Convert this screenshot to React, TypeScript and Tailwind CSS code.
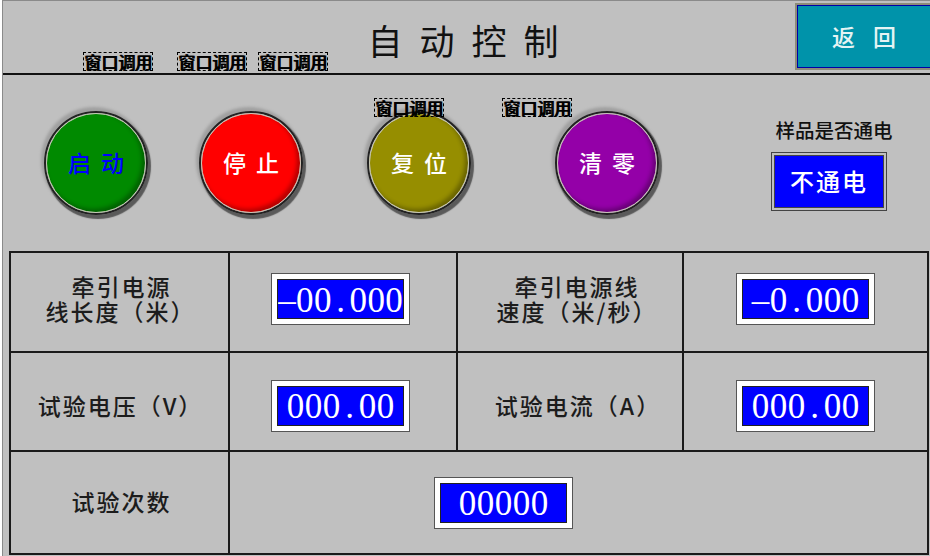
import React from "react";

const CJK = "font-['Noto_Sans_CJK_SC','Liberation_Serif',serif]";

function CallLabel({ className }: { className: string }) {
  return (
    <div
      className={`absolute h-[19px] w-[70px] whitespace-nowrap border border-dashed border-black text-center text-[17px] font-medium leading-[17px] text-black [text-shadow:1px_0_0_#000] ${className}`}
    >
      窗口调用
    </div>
  );
}

function RoundButton({ label, fill, text, className }: { label: string; fill: string; text: string; className: string }) {
  return (
    <div
      className={`flex h-[104px] w-[104px] shrink-0 items-center justify-center rounded-full border-2 border-[#222] shadow-[2px_3px_1px_1px_#5a5a5a,-2px_-3px_3px_1px_#a0a0a0] ${className}`}
    >
      <div
        className={`flex h-full w-full items-center justify-center rounded-full border border-[#c8c8b8] text-[23px] font-medium shadow-[inset_-3px_-3px_4px_rgba(0,0,0,0.3)] ${fill} ${text}`}
      >
        <span className="mr-[-10px] tracking-[10px]">{label}</span>
      </div>
    </div>
  );
}

function NumberBox({ value, overflow }: { value: string; overflow?: boolean }) {
  return (
    <div className="h-[52px] w-[139px] border border-[#555] bg-white p-[5px]">
      <div
        className={`flex h-full items-center overflow-hidden whitespace-nowrap border border-[#222] bg-[#0000ff] pt-[2px] font-['Liberation_Serif',serif] text-[35px] leading-none text-white ${overflow ? "justify-start" : "justify-center"}`}
      >
        {value.split("").map((c, i) => (
          <span key={i} className="inline-block w-[18px] text-center">
            {c}
          </span>
        ))}
      </div>
    </div>
  );
}

function Cell({ children, className = "" }: { children: React.ReactNode; className?: string }) {
  return <div className={`flex items-center justify-center bg-[#c0c0c0] ${className}`}>{children}</div>;
}

function Label({ children, className = "" }: { children: React.ReactNode; className?: string }) {
  return <div className={`whitespace-nowrap text-[23px] font-medium leading-[25px] tracking-[2px] text-[#1c1c1c] ${className}`}>{children}</div>;
}

export default function App() {
  return (
    <div className={`relative ml-[2px] h-[556px] w-[928px] overflow-hidden border-l border-t border-[#8a8a8a] bg-[#c0c0c0] ${CJK}`}>
      {/* header */}
      <div className="relative flex h-[74px] items-center justify-center border-b-2 border-[#111]">
        <div className="ml-[10px] mt-[6px] text-[35px] font-normal tracking-[17px] text-[#111]">自动控制</div>
        <div className="absolute left-[792px] top-[2px] flex h-[67px] w-[140px] items-center justify-center border-2 border-[#8c8c78] bg-[#0000a8] p-px">
          <div className="flex h-full w-full items-center justify-center bg-[#0093aa] pl-[16px] text-[23px] font-medium tracking-[18px] text-[#e4f4f4]">返回</div>
        </div>
      </div>
      <CallLabel className="left-[80px] top-[51px]" />
      <CallLabel className="left-[174px] top-[51px]" />
      <CallLabel className="left-[255px] top-[51px]" />

      {/* buttons */}
      <div className="relative flex h-[176px] items-center pb-[1px] pl-[41px]">
        <RoundButton label="启动" fill="bg-[#008a00]" text="text-[#0000ff]" className="" />
        <RoundButton label="停止" fill="bg-[#ff0000]" text="text-white" className="ml-[51px]" />
        <RoundButton label="复位" fill="bg-[#968e00]" text="text-white" className="ml-[64px]" />
        <RoundButton label="清零" fill="bg-[#9400a8]" text="text-white" className="ml-[84px]" />
        <div className="ml-[112px] mt-[4px] flex w-[116px] flex-col items-center gap-[11px]">
          <div className="ml-[10px] whitespace-nowrap text-[19.5px] font-medium leading-[22px] text-[#111]">样品是否通电</div>
          <div className="flex h-[59px] w-[116px] items-center justify-center border border-[#444] bg-[#c0c0c0] p-[2px]">
            <div className="flex h-full w-full items-center justify-center border border-[#444] bg-[#0000ff] text-[24px] font-medium tracking-[2px] text-white">不通电</div>
          </div>
        </div>
        <CallLabel className="left-[371px] top-[23px]" />
        <CallLabel className="left-[499px] top-[23px]" />
      </div>

      {/* data table */}
      <div className="ml-[6px] grid h-[304px] w-[920px] grid-cols-[217px_226px_224px_1fr] grid-rows-[98px_97px_1fr] gap-[2px] border-2 border-[#1a1a1a] bg-[#1a1a1a]">
        <Cell className="pb-[7px] pl-[2px]">
          <Label className="text-center indent-[2px]">
            牵引电源
            <br />
            线长度（米）
          </Label>
        </Cell>
        <Cell className="pb-[6px] pr-[5px]">
          <NumberBox value="–00.000" overflow />
        </Cell>
        <Cell className="pb-[7px] pl-[14px]">
          <Label className="text-center">
            牵引电源线
            <br />
            速度（米/秒）
          </Label>
        </Cell>
        <Cell className="pb-[6px]">
          <NumberBox value="–0.000" />
        </Cell>
        <Cell className="pl-[2px] pt-[8px]">
          <Label>试验电压（V）</Label>
        </Cell>
        <Cell className="pr-[5px] pt-[8px]">
          <NumberBox value="000.00" />
        </Cell>
        <Cell className="pl-[16px] pt-[8px]">
          <Label>试验电流（A）</Label>
        </Cell>
        <Cell className="pt-[8px]">
          <NumberBox value="000.00" />
        </Cell>
        <Cell className="pb-[2px] pl-[4px]">
          <Label>试验次数</Label>
        </Cell>
        <Cell className="col-span-3 justify-start pl-[204px]">
          <NumberBox value="00000" />
        </Cell>
      </div>
    </div>
  );
}
